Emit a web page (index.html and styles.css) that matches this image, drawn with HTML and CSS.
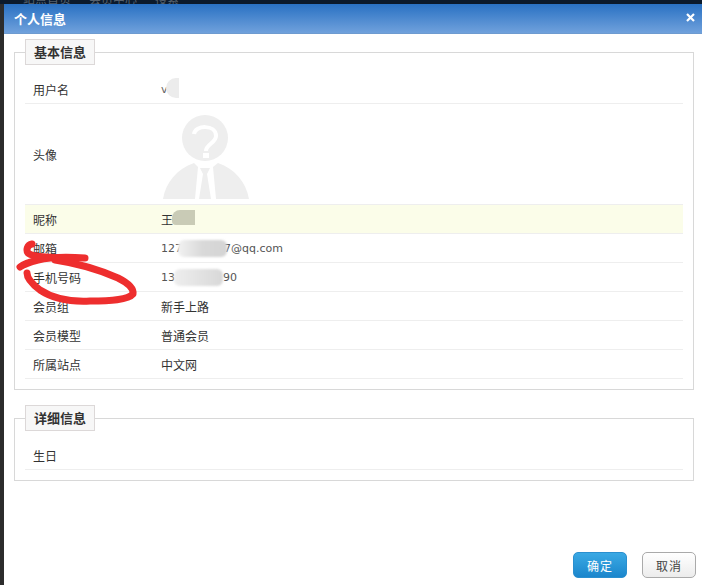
FILE: index.html
```html
<!DOCTYPE html>
<html lang="zh-CN">
<head>
<meta charset="utf-8">
<title>个人信息</title>
<link rel="stylesheet" href="styles.css">
</head>
<body>
<div class="topnav"><span>站点首页</span><span>会员中心</span><span>搜索</span></div>
<div class="dialog">
  <div class="titlebar">
    <span class="title">个人信息</span>
    <svg class="close" width="9" height="9" viewBox="0 0 9 9"><path d="M1 1l7 7M8 1l-7 7" stroke="#fff" stroke-width="2.2" fill="none"/></svg>
  </div>
  <div class="content">
    <fieldset class="group">
      <legend>基本信息</legend>
      <div class="row"><div class="label">用户名</div><div class="value"><span class="uname">v</span><i class="blur blur-u"></i></div></div>
      <div class="row row-avatar"><div class="label">头像</div><div class="value">
        <svg class="avatar" width="87" height="86" viewBox="0 0 87 86">
          <circle cx="42" cy="24" r="23" fill="#eeeeee"/>
          <path d="M31 20C32 11 53 10 53 22C53 29 43 30 43 37" stroke="#fff" stroke-width="4" fill="none"/>
          <rect x="40" y="39" width="6" height="5" fill="#fff"/>
          <path d="M0 85C3 68 14 55 31 49L35 53L32 85ZM86 85C83 68 72 55 55 49L50 53L53 85Z" fill="#eeeeee"/>
          <path d="M37 54h10l-3 6l4 25h-12l4-25z" fill="#eeeeee"/>
        </svg>
      </div></div>
      <div class="row row-hl"><div class="label">昵称</div><div class="value">王<i class="blur blur-n"></i></div></div>
      <div class="row"><div class="label">邮箱</div><div class="value latin">127<i class="blur blur-e"></i><span class="gap-e"></span>7@qq.com</div></div>
      <div class="row"><div class="label">手机号码</div><div class="value latin">13<i class="blur blur-p"></i><span class="gap-p"></span>90</div></div>
      <div class="row"><div class="label">会员组</div><div class="value">新手上路</div></div>
      <div class="row"><div class="label">会员模型</div><div class="value">普通会员</div></div>
      <div class="row"><div class="label">所属站点</div><div class="value">中文网</div></div>
    </fieldset>
    <fieldset class="group">
      <legend>详细信息</legend>
      <div class="row"><div class="label">生日</div><div class="value"></div></div>
    </fieldset>
  </div>
  <div class="footer">
    <button class="btn btn-ok" type="button">确定</button>
    <button class="btn btn-cancel" type="button">取消</button>
  </div>
</div>
<svg class="scribble" width="702" height="585" viewBox="0 0 702 585">
  <path d="M32 244C27 245 26 250 28 253C33 258 60 258 85 258C70 257 50 257 38 260C30 262 24 264 20 267" stroke="#ee2e2e" stroke-width="7" fill="none" stroke-linecap="round" stroke-linejoin="round"/>
  <path d="M55 260C75 263 100 270 118 278C128 283 134 288 133 294C128 300 110 301 90 301C70 302 52 298 40 290C32 284 27 278 27 273" stroke="#ee2e2e" stroke-width="7" fill="none" stroke-linecap="round" stroke-linejoin="round"/>
</svg>
</body>
</html>
```
FILE: styles.css
```css
* { box-sizing: border-box; }
html, body { margin: 0; height: 100%; }
body {
  background: #2c2c2c;
  overflow: hidden;
  font-family: "Liberation Sans", "Noto Sans CJK SC", sans-serif;
  font-size: 12px;
  color: #333;
  position: relative;
  padding-left: 4px;
}
.topnav {
  height: 4px;
  margin-left: -4px;
  background: #0b1a2c;
  overflow: hidden;
  display: flex;
  gap: 18px;
  padding-left: 23px;
  line-height: 0;
  color: #56616e;
}
.dialog {
  height: 581px;
  background: #fff;
  display: flex;
  flex-direction: column;
}
.titlebar {
  height: 30px;
  flex: none;
  background: linear-gradient(#2971c3, #70a1dc);
  border-bottom: 1px solid #6e9bd0;
  display: flex;
  align-items: center;
  justify-content: space-between;
  padding: 0 7px 0 10px;
}
.title {
  color: #fff;
  font-size: 13px;
  font-weight: bold;
  font-family: "Noto Sans CJK SC", sans-serif;
}
.close { margin-top: -3px; }
.content { padding: 5px 8px 0 10px; }
.group {
  margin: 0 0 15px;
  padding: 10px 10px 10px;
  border: 1px solid #d8d8d8;
  min-width: 0;
}
.group legend {
  margin: 0 auto 0 0;
  padding: 0 8px;
  height: 26px;
  line-height: 24px;
  background: #f7f7f7;
  border: 1px solid #dcd8d8;
  font-size: 13px;
  font-weight: bold;
  font-family: "Noto Sans CJK SC", sans-serif;
  color: #333;
}
.row {
  display: flex;
  align-items: center;
  height: 29px;
  border-bottom: 1px solid #eeeeee;
  padding-left: 8px;
  font-family: "Noto Sans CJK SC", sans-serif;
}
.row-avatar { height: 101px; }
.row-hl { background: #fbfde9; }
.label { width: 128px; flex: none; }
.value { position: relative; display: flex; align-items: center; flex: 1; height: 100%; }
.latin { font-family: "DejaVu Sans", "Noto Sans CJK SC", sans-serif; font-size: 11px; color: #555; }
.uname { font-family: "DejaVu Sans", sans-serif; color: #666; font-size: 11px; }
.avatar { display: block; margin-left: 2px; margin-top: 5px; }
.blur { position: absolute; display: block; }
.blur-u { left: 5px; top: 3px; width: 13px; height: 20px; background: #ececec; border-radius: 10px 0 0 10px; }
.blur-n { left: 11px; top: 5px; width: 23px; height: 15px; background: #c9cbb6; border-radius: 8px 0 0 4px; }
.blur-e { left: 17px; top: 6px; width: 49px; height: 17px; background: linear-gradient(90deg, #f2f2f2, #d9d9d9 50%, #d4d4d4); border-radius: 6px; filter: blur(1px); }
.blur-p { left: 13px; top: 6px; width: 49px; height: 17px; background: linear-gradient(90deg, #eeeeee, #d8d8d8); border-radius: 6px; filter: blur(1px); }
.gap-e { width: 42px; flex: none; }
.gap-p { width: 48px; flex: none; }
.footer {
  margin-top: auto;
  display: flex;
  justify-content: flex-end;
  gap: 15px;
  padding: 0 6px 7px 0;
}
.btn {
  width: 54px;
  height: 26px;
  padding: 0;
  border-radius: 5px;
  font-size: 12px;
  font-family: "Noto Sans CJK SC", sans-serif;
  letter-spacing: 1px;
}
.btn-ok {
  border: 1px solid #2a8fcf;
  background: linear-gradient(#3aa9e4, #1b86cc);
  color: #fff;
}
.btn-cancel {
  border: 1px solid #aaa;
  background: linear-gradient(#fff, #ececec);
  color: #444;
}
.scribble { position: absolute; left: 0; top: 0; pointer-events: none; }
```
